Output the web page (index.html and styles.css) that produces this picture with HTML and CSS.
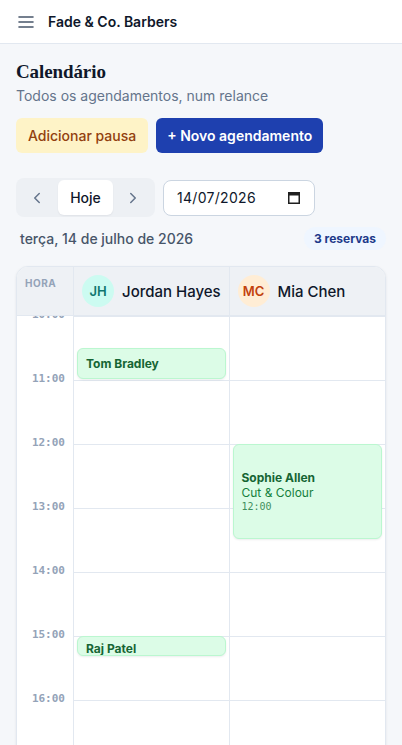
FILE: index.html
```html
<!DOCTYPE html>
<html lang="pt">
<head>
<meta charset="utf-8">
<meta name="viewport" content="width=device-width, initial-scale=1">
<title>Calendário</title>
<link rel="stylesheet" href="styles.css">
</head>
<body>
<header class="topbar">
  <svg class="menu-icon" width="16" height="12" viewBox="0 0 16 12" aria-hidden="true">
    <path d="M1 1h14M1 6h14M1 11h14" fill="none" stroke="#475569" stroke-width="1.6" stroke-linecap="round"/>
  </svg>
  <span class="brand">Fade &amp; Co. Barbers</span>
</header>
<main class="page">
  <h1 class="title">Calendário</h1>
  <p class="subtitle">Todos os agendamentos, num relance</p>

  <div class="actions">
    <button class="btn btn-break">Adicionar pausa</button>
    <button class="btn btn-primary">+ Novo agendamento</button>
  </div>

  <div class="nav-row">
    <div class="seg">
      <button class="seg-btn" aria-label="Anterior">
        <svg width="18" height="18" viewBox="0 0 24 24"><path d="m15 18-6-6 6-6" fill="none" stroke="#64748b" stroke-width="2" stroke-linecap="round" stroke-linejoin="round"/></svg>
      </button>
      <button class="seg-btn seg-today">Hoje</button>
      <button class="seg-btn" aria-label="Seguinte">
        <svg width="18" height="18" viewBox="0 0 24 24"><path d="m9 18 6-6-6-6" fill="none" stroke="#64748b" stroke-width="2" stroke-linecap="round" stroke-linejoin="round"/></svg>
      </button>
    </div>
    <div class="date-input">
      <span class="date-value">14/07/2026</span>
      <svg class="cal-icon" width="12" height="13" viewBox="0 0 12 13" aria-hidden="true">
        <rect x="0.75" y="1.75" width="10.5" height="10.5" fill="none" stroke="#1f1f1f" stroke-width="1.5"/>
        <rect x="0" y="1" width="12" height="3.5" fill="#1f1f1f"/>
      </svg>
    </div>
  </div>

  <div class="date-row">
    <span class="date-label">terça, 14 de julho de 2026</span>
    <span class="badge">3 reservas</span>
  </div>

  <section class="cal">
    <div class="cal-head">
      <div class="hora">HORA</div>
      <div class="staff">
        <span class="avatar avatar-jh">JH</span>
        <span class="staff-name">Jordan Hayes</span>
      </div>
      <div class="staff">
        <span class="avatar avatar-mc">MC</span>
        <span class="staff-name">Mia Chen</span>
      </div>
    </div>
    <div class="cal-body">
      <div class="times">
        <div class="tslot"><span class="tlabel">10:00</span></div>
        <div class="tslot"><span class="tlabel">11:00</span></div>
        <div class="tslot"><span class="tlabel">12:00</span></div>
        <div class="tslot"><span class="tlabel">13:00</span></div>
        <div class="tslot"><span class="tlabel">14:00</span></div>
        <div class="tslot"><span class="tlabel">15:00</span></div>
        <div class="tslot"><span class="tlabel">16:00</span></div>
        <div class="tslot"><span class="tlabel">17:00</span></div>
      </div>
      <div class="col">
        <div class="slot"></div><div class="slot"></div><div class="slot"></div><div class="slot"></div>
        <div class="slot"></div><div class="slot"></div><div class="slot"></div><div class="slot"></div>
        <div class="appt" style="top:32px;height:31px;">
          <span class="appt-name">Tom Bradley</span>
        </div>
        <div class="appt appt-short" style="top:320px;height:20px;">
          <span class="appt-name">Raj Patel</span>
        </div>
      </div>
      <div class="col">
        <div class="slot"></div><div class="slot"></div><div class="slot"></div><div class="slot"></div>
        <div class="slot"></div><div class="slot"></div><div class="slot"></div><div class="slot"></div>
        <div class="appt" style="top:128px;height:95px;">
          <span class="appt-name">Sophie Allen</span>
          <span class="appt-service">Cut &amp; Colour</span>
          <span class="appt-time">12:00</span>
        </div>
      </div>
    </div>
  </section>
</main>
</body>
</html>
```

FILE: styles.css
```css
* { box-sizing: border-box; }

html, body {
  margin: 0;
  padding: 0;
}

body {
  background: #f5f7fa;
  font-family: Inter, "Noto Sans", "Liberation Sans", sans-serif;
  color: #0f172a;
}

button {
  font-family: inherit;
  border: none;
  margin: 0;
  cursor: pointer;
}

.topbar {
  height: 44px;
  background: #ffffff;
  border-bottom: 1px solid #e2e8f0;
  display: flex;
  align-items: center;
  gap: 14px;
  padding: 0 16px 0 18px;
}

.menu-icon { display: block; }

.brand {
  font-size: 14px;
  font-weight: 600;
  color: #0f172a;
}

.page {
  padding: 16px 16px 0 16px;
}

.title {
  margin: 0;
  font-family: "Liberation Serif", "DejaVu Serif", serif;
  font-weight: 700;
  font-size: 19px;
  line-height: 23px;
  color: #0f172a;
  letter-spacing: -0.1px;
}

.subtitle {
  margin: 3px 0 0 0;
  font-size: 14px;
  line-height: 20px;
  color: #64748b;
}

.actions {
  margin-top: 12px;
  display: flex;
  gap: 8px;
}

.btn {
  height: 35px;
  padding: 0 12px;
  border-radius: 6px;
  font-size: 14px;
  white-space: nowrap;
}

.btn-break {
  background: #fef3c7;
  color: #92400e;
  font-weight: 500;
}

.btn-primary {
  background: #1e40af;
  color: #ffffff;
  font-weight: 600;
  padding: 0 11px;
}

.nav-row {
  margin-top: 25px;
  display: flex;
  align-items: center;
  gap: 8px;
}

.seg {
  display: flex;
  align-items: center;
  background: #edf0f4;
  border-radius: 8px;
  padding: 2px;
  height: 39px;
}

.seg-btn {
  height: 35px;
  width: 40px;
  background: transparent;
  border-radius: 6px;
  display: flex;
  align-items: center;
  justify-content: center;
  padding: 0;
}

.seg-btn:first-child svg { margin-left: -2px; }

.seg-today {
  width: 55px;
  background: #ffffff;
  font-size: 14px;
  font-weight: 500;
  color: #0f172a;
  box-shadow: 0 1px 2px rgba(15, 23, 42, 0.06);
}

.date-input {
  width: 152px;
  height: 36px;
  background: #ffffff;
  border: 1px solid #cbd5e1;
  border-radius: 8px;
  display: flex;
  align-items: center;
  justify-content: space-between;
  padding: 0 14px 0 13px;
}

.date-value {
  font-size: 14px;
  color: #0f172a;
  letter-spacing: 0.3px;
}

.cal-icon { display: block; }

.date-row {
  margin-top: 10px;
  height: 23px;
  display: flex;
  align-items: center;
  justify-content: space-between;
  padding-left: 4px;
}

.date-label {
  font-size: 14px;
  font-weight: 500;
  color: #475569;
}

.badge {
  height: 23px;
  display: flex;
  align-items: center;
  padding: 0 10px;
  border-radius: 999px;
  background: #eff6ff;
  color: #1e3a8a;
  font-size: 12px;
  font-weight: 700;
}

.cal {
  margin-top: 16px;
  background: #ffffff;
  border: 1px solid #e2e8f0;
  border-radius: 12px;
  overflow: hidden;
  box-shadow: 0 1px 3px rgba(15, 23, 42, 0.08);
}

.cal-head {
  display: grid;
  grid-template-columns: 57px 1fr 1fr;
  background: #eef1f5;
  border-bottom: 1px solid #e2e8f0;
}

.hora {
  border-right: 1px solid #e2e8f0;
  padding: 10px 0 0 8px;
  font-size: 10px;
  font-weight: 700;
  letter-spacing: 0.5px;
  color: #94a3b8;
  line-height: 12px;
}

.staff {
  display: flex;
  align-items: center;
  gap: 8px;
  padding: 8px 2px 8px 8px;
  border-right: 1px solid #e2e8f0;
  min-width: 0;
}

.staff:last-child { border-right: none; }

.avatar {
  width: 32px;
  height: 32px;
  border-radius: 50%;
  display: flex;
  align-items: center;
  justify-content: center;
  font-size: 13px;
  font-weight: 600;
  flex-shrink: 0;
}

.avatar-jh { background: #ccfbf1; color: #0f766e; }
.avatar-mc { background: #ffedd5; color: #c2410c; }

.staff-name {
  font-size: 15px;
  font-weight: 500;
  color: #0f172a;
  white-space: nowrap;
}

.cal-body {
  display: grid;
  grid-template-columns: 57px 1fr 1fr;
  overflow: hidden;
}

.times {
  border-right: 1px solid #e2e8f0;
}

.tslot {
  height: 64px;
  position: relative;
}

.tlabel {
  position: absolute;
  top: -7px;
  right: 8px;
  font-family: "DejaVu Sans Mono", "Liberation Mono", monospace;
  font-size: 11px;
  line-height: 12px;
  font-weight: 600;
  color: #94a3b8;
}

.col {
  position: relative;
  border-right: 1px solid #e2e8f0;
}

.col:last-child { border-right: none; }

.slot {
  height: 64px;
  border-top: 1px solid #e2e8f0;
}

.appt {
  position: absolute;
  left: 3px;
  right: 3px;
  background: #dcfce7;
  border: 1px solid #bbf7d0;
  border-radius: 6px;
  box-shadow: 0 1px 2px rgba(15, 23, 42, 0.08);
  padding: 0 8px;
  display: flex;
  flex-direction: column;
  justify-content: center;
  overflow: hidden;
}

.appt-short {
  justify-content: flex-start;
  padding-top: 4px;
}

.appt-name {
  font-size: 12px;
  line-height: 15px;
  font-weight: 700;
  color: #166534;
}

.appt-service {
  font-size: 12px;
  line-height: 15px;
  color: #15803d;
}

.appt-time {
  font-family: "DejaVu Sans Mono", "Liberation Mono", monospace;
  font-size: 10px;
  line-height: 14px;
  color: #3f8f5d;
}
```
